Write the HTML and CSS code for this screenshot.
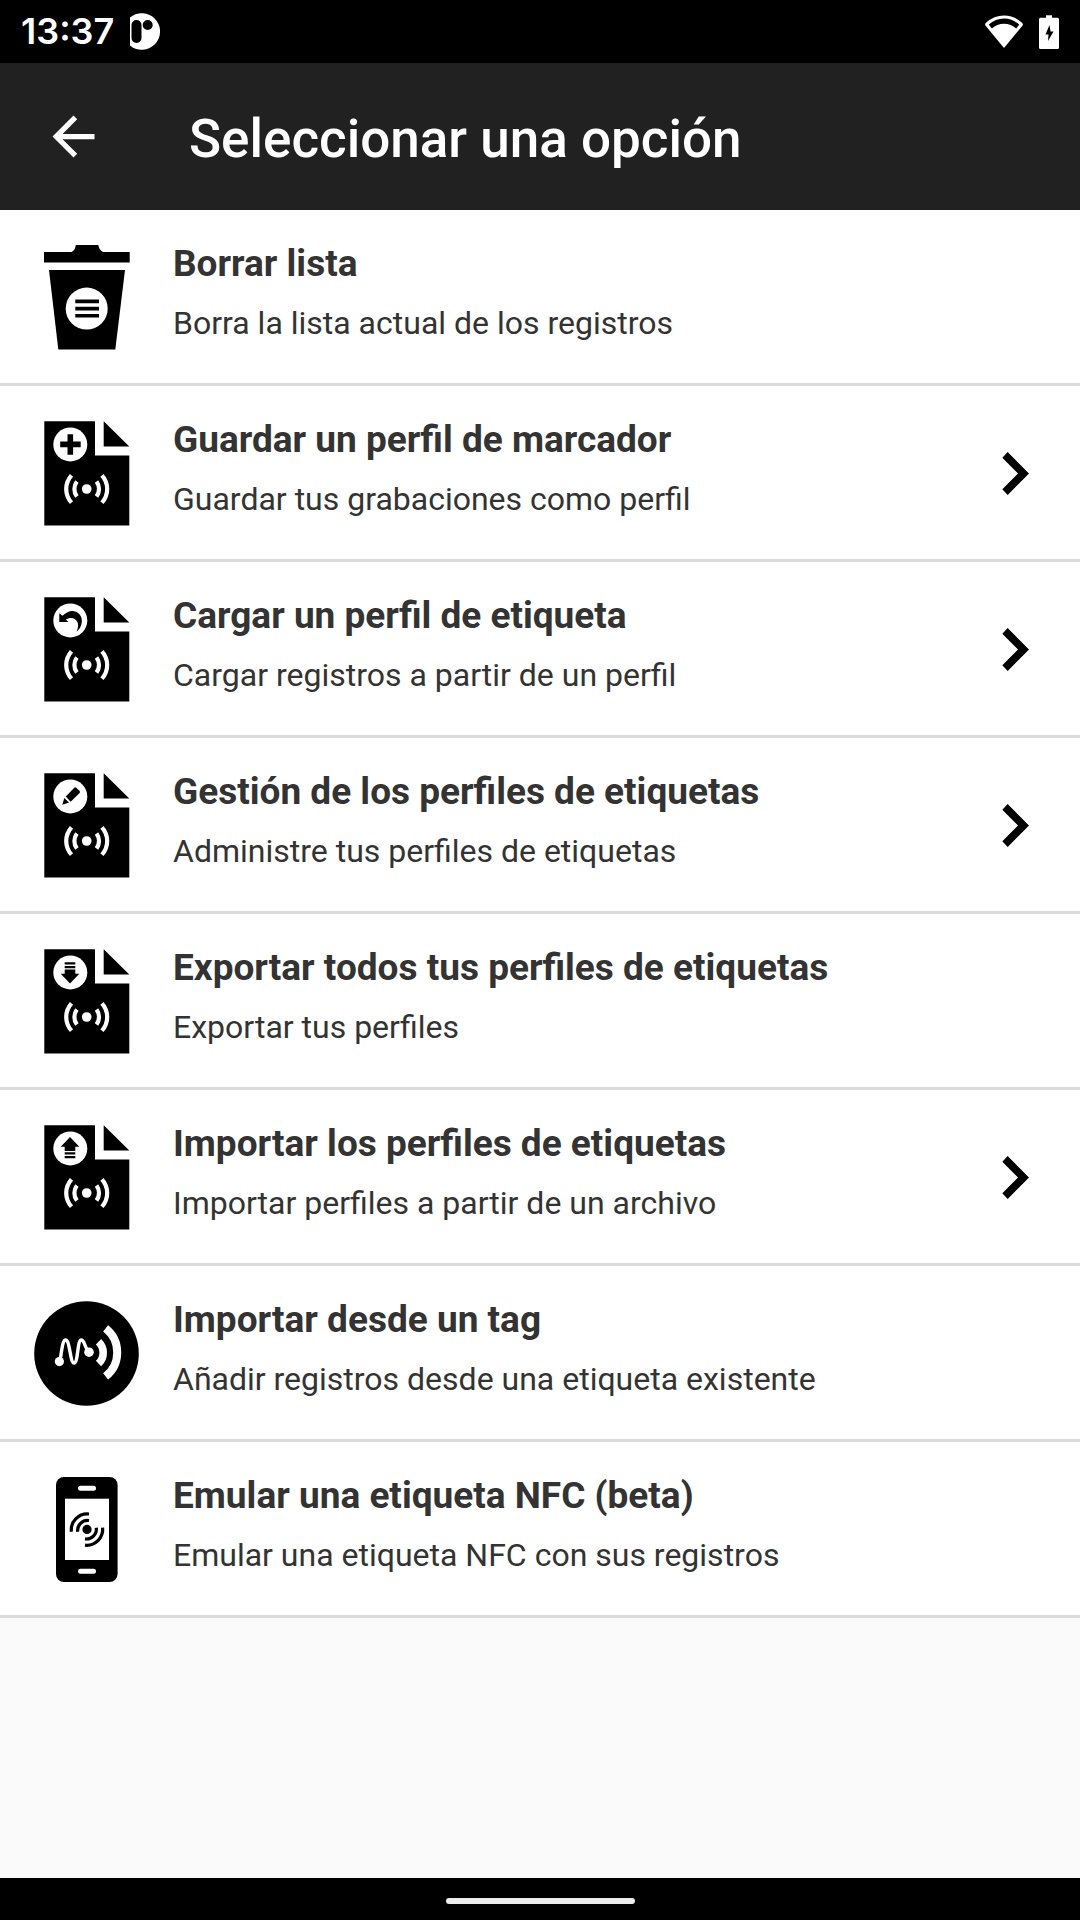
FILE: index.html
```html
<!DOCTYPE html>
<html lang="es">
<head>
    <meta charset="UTF-8">
    <meta name="viewport" content="width=device-width, initial-scale=1.0">
    <title>Seleccionar una opción</title>
    <link rel="stylesheet" href="styles.css">
</head>
<body>

<!-- shared shapes -->
<svg class="defs" aria-hidden="true">
    <symbol id="profile" viewBox="0 0 105 105">
        <path d="M10.3 .3H61V34.6H95.3V104.6H10.3Z"/>
        <path d="M69.7 .3L95.3 25.6H69.7Z"/>
        <circle cx="36.3" cy="23.4" r="17" fill="#fff"/>
        <circle cx="52.7" cy="68" r="4.8" fill="#fff"/>
        <g fill="none" stroke="#fff" stroke-width="4.2">
            <path d="M37.5 54.3A20.4 20.4 0 0 0 37.5 81.7"/>
            <path d="M67.9 54.3A20.4 20.4 0 0 1 67.9 81.7"/>
            <path d="M42.9 60.4A12.7 12.7 0 0 0 42.9 75.6"/>
            <path d="M62.5 60.4A12.7 12.7 0 0 1 62.5 75.6"/>
        </g>
    </symbol>
    <symbol id="chevron" viewBox="0 0 27 43">
        <path d="M5.7 0L27 21.5L5.7 43L.3 37.3L16 21.5L.3 5.7Z"/>
    </symbol>
</svg>

<div class="status-bar">
    <span class="time">13:37</span>
    <svg class="app-icon" viewBox="0 0 30 37">
        <path fill="#fff" fill-rule="evenodd" d="M0 4.5A18.3 18.3 0 1 1 0 32.5ZM6.5 7A5 5 0 0 0 1.5 12V25A5 5 0 0 0 11.5 25V12A5 5 0 0 0 6.5 7ZM17.7 7A5 5 0 1 0 17.7 17A5 5 0 1 0 17.7 7Z"/>
    </svg>
    <div class="status-icons">
        <svg class="wifi" viewBox="0 0 38 33">
            <path fill="#fff" fill-rule="evenodd" d="M19 33L.4 10.5Q-.4 9 1 7.8Q9 .6 19 .6T37 7.8Q38.4 9 37.6 10.5ZM3.8 9.6L6.8 13.6Q12 8.8 19 8.8T31.2 13.6L34.2 9.6Q27.5 3.4 19 3.4T3.8 9.6Z"/>
        </svg>
        <svg class="battery" viewBox="0 0 20 34">
            <path fill="#fff" fill-rule="evenodd" d="M7 .3H13V2.7H18.5Q20 2.7 20 4.2V32.5Q20 34 18.5 34H1.5Q0 34 0 32.5V4.2Q0 2.7 1.5 2.7H7ZM10.5 10L6.5 19.5H9.5L9 26L14.5 16.5H11.5Z"/>
        </svg>
    </div>
</div>

<header>
    <button class="back" aria-label="Atrás">
        <svg viewBox="0 0 24 24"><path fill="#fff" d="M20 11H7.83l5.59-5.59L12 4l-8 8 8 8 1.41-1.41L7.83 13H20v-2z"/></svg>
    </button>
    <h1>Seleccionar una opción</h1>
</header>

<main>
    <ul class="options">
        <li>
            <button class="option">
                <svg class="icon" viewBox="0 0 105 105">
                    <path d="M10 7H37.5Q41.5 5 41.7 0H64.3Q65 5 69 7H95.7V17.4H10Z"/>
                    <path d="M15 25H91L81.3 104.4H24.3Z"/>
                    <circle cx="52.7" cy="63.6" r="21" fill="#fff"/>
                    <path d="M41.3 54.6H65V58.2H41.3ZM41.3 61.8H65V65.4H41.3ZM41.3 69H65V72.6H41.3Z"/>
                </svg>
                <span class="text">
                    <span class="title">Borrar lista</span>
                    <span class="subtitle">Borra la lista actual de los registros</span>
                </span>
            </button>
        </li>
        <li>
            <button class="option">
                <svg class="icon" viewBox="0 0 105 105">
                    <use href="#profile"/>
                    <path d="M33.5 13.2H39.1V20.6H46.7V26.2H39.1V33.7H33.5V26.2H26.2V20.6H33.5Z"/>
                </svg>
                <span class="text">
                    <span class="title">Guardar un perfil de marcador</span>
                    <span class="subtitle">Guardar tus grabaciones como perfil</span>
                </span>
                <svg class="chevron"><use href="#chevron"/></svg>
            </button>
        </li>
        <li>
            <button class="option">
                <svg class="icon" viewBox="0 0 105 105">
                    <use href="#profile"/>
                    <path d="M25.3 16.2L28.5 18.7C32 15.2 36 13.7 39 14C45 14.7 48.5 19.7 47.8 25.2C47.3 29.7 45 32.7 42.5 34.7C44.5 30.7 44.5 27.2 43.3 24.7C41.5 20.7 36 19.7 31.8 22.5L34.3 25H25.3Z"/>
                </svg>
                <span class="text">
                    <span class="title">Cargar un perfil de etiqueta</span>
                    <span class="subtitle">Cargar registros a partir de un perfil</span>
                </span>
                <svg class="chevron"><use href="#chevron"/></svg>
            </button>
        </li>
        <li>
            <button class="option">
                <svg class="icon" viewBox="0 0 105 105">
                    <use href="#profile"/>
                    <path d="M28.3 31.7L30.3 25L35 29.6Z"/>
                    <path d="M31.8 23.4L40.3 14.7Q41.2 13.9 42.2 14.7L45.7 17.9Q46.5 18.9 45.6 19.9L36.7 28.7Z"/>
                </svg>
                <span class="text">
                    <span class="title">Gestión de los perfiles de etiquetas</span>
                    <span class="subtitle">Administre tus perfiles de etiquetas</span>
                </span>
                <svg class="chevron"><use href="#chevron"/></svg>
            </button>
        </li>
        <li>
            <button class="option">
                <svg class="icon" viewBox="0 0 105 105">
                    <use href="#profile"/>
                    <path d="M30.7 13.2H41.3V15.6H30.7ZM30.7 16.9H41.3V19.3H30.7ZM30.7 20.6H41.3V24.7H45.3L36 34.4L26.7 24.7H30.7Z"/>
                </svg>
                <span class="text">
                    <span class="title">Exportar todos tus perfiles de etiquetas</span>
                    <span class="subtitle">Exportar tus perfiles</span>
                </span>
            </button>
        </li>
        <li>
            <button class="option">
                <svg class="icon" viewBox="0 0 105 105">
                    <use href="#profile"/>
                    <path d="M36 12L45.3 21.7H41.3V25.9H30.7V21.7H26.7ZM30.7 27.2H41.3V29.6H30.7ZM30.7 30.9H41.3V33.3H30.7Z"/>
                </svg>
                <span class="text">
                    <span class="title">Importar los perfiles de etiquetas</span>
                    <span class="subtitle">Importar perfiles a partir de un archivo</span>
                </span>
                <svg class="chevron"><use href="#chevron"/></svg>
            </button>
        </li>
        <li>
            <button class="option">
                <svg class="icon" viewBox="0 0 105 105">
                    <circle cx="52.5" cy="52.5" r="52.3"/>
                    <g fill="#fff">
                        <circle cx="25.4" cy="60.6" r="4.6"/>
                        <circle cx="55" cy="51.2" r="4.8"/>
                    </g>
                    <g fill="none" stroke="#fff">
                        <path stroke-width="3.4" d="M26 60C28 48 28.5 39 31.7 39C36 39 36 62 40 62C44.5 62 43 39 47.3 39C50.5 39 50.5 46 54 50"/>
                        <path stroke-width="7.6" d="M64.5 40.8A15 15 0 0 1 64.5 62.6"/>
                        <path stroke-width="8" d="M71.6 27.4A30.6 30.6 0 0 1 71.6 75.4"/>
                    </g>
                </svg>
                <span class="text">
                    <span class="title">Importar desde un tag</span>
                    <span class="subtitle">Añadir registros desde una etiqueta existente</span>
                </span>
            </button>
        </li>
        <li>
            <button class="option">
                <svg class="icon" viewBox="0 0 105 105">
                    <rect x="22" y="0" width="61.6" height="105" rx="8"/>
                    <g fill="#fff">
                        <rect x="31" y="21.7" width="44" height="61.3"/>
                        <rect x="44" y="8.7" width="18" height="5" rx="2.5"/>
                        <rect x="44" y="91.7" width="18" height="5" rx="2.5"/>
                    </g>
                    <circle cx="53" cy="52.4" r="4.6"/>
                    <g fill="none" stroke="#000" stroke-width="3.2">
                        <path d="M55 37A16 16 0 0 0 37.4 54.7"/>
                        <path d="M55 43.5A10 10 0 0 0 43.7 54.7"/>
                        <path d="M68.6 50.7A16 16 0 0 1 51 68.2"/>
                        <path d="M62.3 50.7A10 10 0 0 1 51 61.9"/>
                    </g>
                </svg>
                <span class="text">
                    <span class="title">Emular una etiqueta NFC (beta)</span>
                    <span class="subtitle">Emular una etiqueta NFC con sus registros</span>
                </span>
            </button>
        </li>
    </ul>
</main>

<footer>
    <div class="home-indicator"></div>
</footer>

</body>
</html>
```
FILE: styles.css
```css
* {
    box-sizing: border-box;
}

body {
    margin: 0;
    font-family: Roboto, sans-serif;
    background: #fafafa;
    color: #333;
    display: flex;
    flex-direction: column;
    min-height: 100vh;
}

svg {
    display: block;
    flex-shrink: 0;
}

.defs {
    position: absolute;
    width: 0;
    height: 0;
}

button {
    border: none;
    background: none;
    padding: 0;
    margin: 0;
    font: inherit;
    color: inherit;
    text-align: left;
    cursor: pointer;
}

.status-bar {
    display: flex;
    align-items: center;
    height: 63px;
    padding: 0 21px;
    background: #000;
    color: #fff;
}

.time {
    font-family: Inter, Roboto, sans-serif;
    font-size: 36px;
    font-weight: 600;
    line-height: 40px;
    padding-bottom: 2px;
}

.app-icon {
    width: 30px;
    height: 37px;
    margin-left: 16px;
}

.status-icons {
    display: flex;
    align-items: center;
    gap: 16px;
    margin-left: auto;
}

.wifi {
    width: 38px;
    height: 33px;
}

.battery {
    width: 20px;
    height: 34px;
}

header {
    display: flex;
    align-items: center;
    height: 147px;
    padding: 0 42px;
    background: #212121;
    color: #fff;
}

.back svg {
    width: 63px;
    height: 63px;
}

h1 {
    margin: 0 0 0 84px;
    padding-top: 5px;
    font-size: 53px;
    font-weight: 500;
    line-height: 62px;
}

main {
    flex: 1;
}

.options {
    list-style: none;
    margin: 0;
    padding: 0;
    background: #fff;
}

.options li {
    border-bottom: 3px solid #dbdbdb;
}

.option {
    display: flex;
    align-items: center;
    width: 100%;
    padding: 32px 51px 30px 34px;
}

.option:active {
    background: #eee;
}

.icon {
    width: 105px;
    height: 105px;
}

.text {
    display: flex;
    flex-direction: column;
    flex: 1;
    gap: 18px;
    margin-left: 34px;
    padding-bottom: 11px;
}

.title {
    font-size: 37px;
    font-weight: 700;
    line-height: 44px;
}

.subtitle {
    font-size: 32px;
    line-height: 38px;
}

.chevron {
    width: 27px;
    height: 43px;
}

footer {
    display: flex;
    align-items: center;
    justify-content: center;
    height: 42px;
    padding-top: 3px;
    background: #000;
}

.home-indicator {
    width: 189px;
    height: 6px;
    border-radius: 3px;
    background: #ececec;
}
```
